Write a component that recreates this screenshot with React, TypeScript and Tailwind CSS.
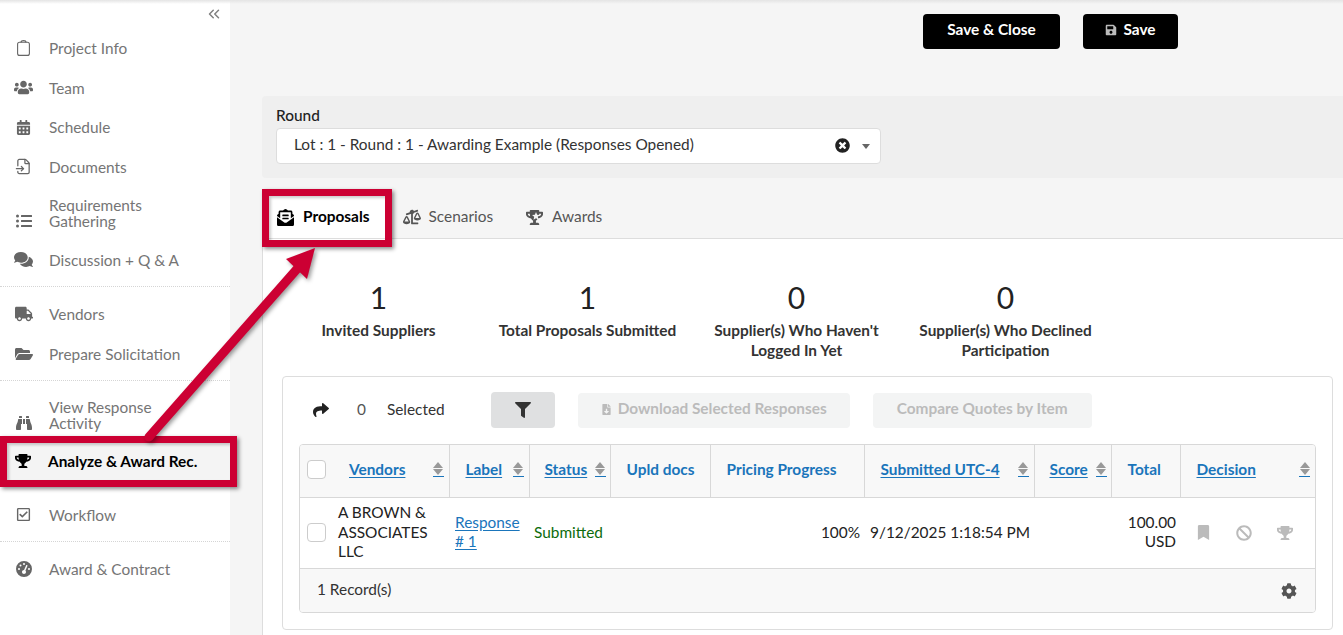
// Awarding page
import React from "react";
import { ChevronsLeft, FileInput } from "lucide-react";
import {
  FaBalanceScaleLeft,
  FaBan,
  FaBinoculars,
  FaBookmark,
  FaCalendarAlt,
  FaCog,
  FaComments,
  FaEnvelopeOpenText,
  FaFileDownload,
  FaFilter,
  FaFolderOpen,
  FaListUl,
  FaRegCheckSquare,
  FaSave,
  FaShare,
  FaTimesCircle,
  FaTrophy,
  FaTruck,
  FaUsers,
} from "react-icons/fa";
import { FaGaugeHigh } from "react-icons/fa6";

const ClipboardIcon = () => (
  <svg width="13" height="16" viewBox="0 0 13 16" fill="none" stroke="currentColor" strokeWidth="1.1">
    <rect x="0.6" y="2.2" width="11.8" height="13.2" rx="2" />
    <path d="M4 2.4C4 1.2 5 0.6 6.5 0.6S9 1.2 9 2.4" />
  </svg>
);

// trophy with the small star in its cup
const StarTrophy = () => (
  <span className="relative inline-flex">
    <FaTrophy size={17} />
    <svg className="absolute top-[3px] left-[5.5px]" width="8" height="8" viewBox="0 0 10 10">
      <polygon points="5,0 6.4,3.3 10,3.6 7.3,6 8.1,9.6 5,7.7 1.9,9.6 2.7,6 0,3.6 3.6,3.3" fill="#f5f5f5" />
    </svg>
  </span>
);

const NavItem = ({
  icon,
  label,
  active,
  pad = "py-[11.8px]",
}: {
  icon: React.ReactNode;
  label: React.ReactNode;
  active?: boolean;
  pad?: string;
}) => (
  <div
    className={`flex items-end text-[15.4px] leading-[16px] ${pad} ${
      active ? "bg-[#f4f4f4] pl-[13px] font-bold text-black" : "pl-[14px] text-[#757575]"
    }`}
  >
    <span className={`flex h-4 w-[19px] shrink-0 items-center justify-center ${active ? "text-black" : "text-[#666]"}`}>
      {icon}
    </span>
    <span className="ml-4">{label}</span>
  </div>
);

const Divider = ({ className = "mb-[6.5px]" }: { className?: string }) => (
  <div className={`mt-[6.5px] border-t border-dotted border-[#d5d5d5] ${className}`} />
);

const Sidebar = () => (
  <aside className="w-[230px] shrink-0 bg-white">
    <div className="flex h-[28.4px] justify-end pt-[5px] pr-[7px] text-[#808080]">
      <ChevronsLeft size={18} strokeWidth={2} />
    </div>
    <NavItem icon={<ClipboardIcon />} label="Project Info" />
    <NavItem icon={<FaUsers size={19} />} label="Team" />
    <NavItem icon={<FaCalendarAlt size={15} />} label="Schedule" />
    <NavItem icon={<FileInput size={17} strokeWidth={1.8} />} label="Documents" />
    <NavItem
      pad="pt-[10.3px] pb-[10.9px]"
      icon={<FaListUl size={16} />}
      label={<>Requirements<br />Gathering</>}
    />
    <NavItem icon={<FaComments size={19} />} label="Discussion + Q & A" />
    <Divider className="mb-[7.3px]" />
    <NavItem icon={<FaTruck size={18} />} label="Vendors" />
    <NavItem icon={<FaFolderOpen size={18} />} label="Prepare Solicitation" />
    <Divider />
    <NavItem pad="py-[11px]" icon={<FaBinoculars size={16} />} label={<>View Response<br />Activity</>} />
    <NavItem icon={<FaTrophy size={16} />} label="Analyze & Award Rec." active />
    <div className="h-[14px]" />
    <NavItem icon={<FaRegCheckSquare size={15} />} label="Workflow" />
    <Divider />
    <NavItem icon={<FaGaugeHigh size={16} />} label="Award & Contract" />
  </aside>
);

const Tab = ({
  icon,
  label,
  active,
  gap,
}: {
  icon: React.ReactNode;
  label: string;
  active?: boolean;
  gap: string;
}) => (
  <div
    className={`flex h-[48px] items-center px-[15px] pt-[6px] text-[15.4px] ${gap} ${
      active ? "bg-white font-bold text-black" : "text-[#555]"
    }`}
  >
    {icon}
    {label}
  </div>
);

const Stat = ({ value, label }: { value: string; label: React.ReactNode }) => (
  <div className="w-[209px] text-center">
    <div className="text-[30px] leading-[36px] text-[#222]">{value}</div>
    <div className="mt-[5px] text-[15.4px] leading-[20px] font-bold text-[#333]">{label}</div>
  </div>
);

const Sort = () => (
  <span className="flex w-[11px] shrink-0 flex-col items-center gap-[1px] border-b border-[#1a75bb] pb-[1px]">
    <span className="h-0 w-0 border-x-[5px] border-b-[6px] border-x-transparent border-b-[#999]" />
    <span className="h-0 w-0 border-x-[5px] border-t-[6px] border-x-transparent border-t-[#999]" />
  </span>
);

const Check = () => (
  <span className="block h-[19px] w-[19px] shrink-0 rounded-[4px] border border-[#ccc] bg-white" />
);

const HeadLink = ({ children }: { children: React.ReactNode }) => (
  <span className="underline underline-offset-2">{children}</span>
);

const th = "border-l border-[#d8d8d8] px-[4px] pb-[2px] font-bold first:border-l-0";

const ProposalsTable = () => (
  <div className="mt-[16px] overflow-hidden rounded-[4px] border border-[#d8d8d8]">
    <table className="w-full table-fixed border-collapse text-[15.4px] leading-[19px]">
      <colgroup>
        <col className="w-[149px]" />
        <col className="w-[80px]" />
        <col className="w-[81px]" />
        <col className="w-[100px]" />
        <col className="w-[154px]" />
        <col className="w-[170px]" />
        <col className="w-[77px]" />
        <col className="w-[69px]" />
        <col />
      </colgroup>
      <thead>
        <tr className="h-[52px] bg-[#f8f8f8] text-[#1a75bb]">
          <th className={th + " pr-[5px] pl-[7px]"}>
            <div className="flex items-center">
              <Check />
              <span className="ml-[23px] flex-1 text-left"><HeadLink>Vendors</HeadLink></span>
              <Sort />
            </div>
          </th>
          <th className={th}>
            <div className="flex items-center pr-[1px] pl-[12px]">
              <span className="flex-1 text-left"><HeadLink>Label</HeadLink></span>
              <Sort />
            </div>
          </th>
          <th className={th}>
            <div className="flex items-center pl-[1px]">
              <span className="flex-1 pl-[10px] text-left"><HeadLink>Status</HeadLink></span>
              <Sort />
            </div>
          </th>
          <th className={th + " pl-[16px] text-left"}>Upld docs</th>
          <th className={th + " pl-[16px] text-left"}>Pricing Progress</th>
          <th className={th}>
            <div className="flex items-center pr-[1px] pl-[12px]">
              <span className="flex-1 text-left"><HeadLink>Submitted UTC-4</HeadLink></span>
              <Sort />
            </div>
          </th>
          <th className={th}>
            <div className="flex items-center pl-[11px]">
              <span className="flex-1 text-left"><HeadLink>Score</HeadLink></span>
              <Sort />
            </div>
          </th>
          <th className={th + " pl-[16px] text-left"}>Total</th>
          <th className={th}>
            <div className="flex items-center pr-[1px] pl-[12px]">
              <span className="flex-1 text-left"><HeadLink>Decision</HeadLink></span>
              <Sort />
            </div>
          </th>
        </tr>
      </thead>
      <tbody>
        <tr className="h-[71px] border-t border-[#d8d8d8] bg-white text-[#222]">
          <td className="pr-[4px] pl-[7px]">
            <div className="flex items-center">
              <Check />
              <span className="ml-[12px] pb-[1px] leading-[19.5px]">A BROWN &amp; ASSOCIATES LLC</span>
            </div>
          </td>
          <td className="pb-[2px] pl-[6px] text-[#1a75bb] underline underline-offset-2">Response # 1</td>
          <td className="pb-[1px] pl-[5px] text-[#0b6b0b]">Submitted</td>
          <td />
          <td className="pr-[4px] pb-[1px] text-right">100%</td>
          <td colSpan={2} className="pb-[1px] pl-[6px]">9/12/2025 1:18:54 PM</td>
          <td className="pr-[4px] pb-[2px] text-right">100.00 USD</td>
          <td className="pl-[15px]">
            <div className="flex items-center text-[#bbb]">
              <FaBookmark size={15} className="ml-[1px]" />
              <FaBan size={16} className="ml-[25px]" />
              <FaTrophy size={16} className="ml-[25px]" />
            </div>
          </td>
        </tr>
      </tbody>
    </table>
    <div className="flex h-[44px] items-center justify-between border-t border-[#d8d8d8] bg-[#f8f8f8] pr-[18px] pl-[17px] text-[15.4px] text-[#333]">
      <span className="pb-[2px]">1 Record(s)</span>
      <FaCog size={16} className="text-[#555]" />
    </div>
  </div>
);

const Annotations = () => (
  <>
    <div className="pointer-events-none absolute top-0 left-0 h-[4px] w-full bg-gradient-to-b from-[#e4e4e4] to-transparent" />
    <div className="pointer-events-none absolute top-[436px] left-0 h-[51px] w-[237px] border-[7px] border-[#cc0033] shadow-[2px_2px_4px_rgba(0,0,0,0.45),inset_2px_2px_3px_rgba(0,0,0,0.2)]" />
    <div className="pointer-events-none absolute top-[189px] left-[262px] h-[58px] w-[130px] border-[7px] border-[#cc0033] shadow-[2px_2px_4px_rgba(0,0,0,0.45),inset_2px_2px_3px_rgba(0,0,0,0.2)]" />
    <svg
      className="pointer-events-none absolute top-0 left-0 drop-shadow-[2px_2px_2px_rgba(0,0,0,0.4)]"
      width="1343"
      height="635"
    >
      <line x1="149" y1="437" x2="297" y2="269" stroke="#cc0033" strokeWidth="9" strokeLinecap="round" />
      <polygon points="315,248 286,259 307,279" fill="#cc0033" />
    </svg>
  </>
);

const App = () => {
  return (
    <div className="relative flex h-[635px] w-[1343px] overflow-hidden bg-[#f5f5f5] font-['Lato',sans-serif] text-[15.4px]">
      <Sidebar />
      <main className="min-w-0 flex-1">
        <div className="flex h-[96px] gap-[23px] pt-[14px] pl-[693px] font-bold text-white">
          <button className="h-[35px] w-[137px] rounded-[4px] bg-black pb-[3px]">Save &amp; Close</button>
          <button className="flex h-[35px] w-[95px] items-center justify-center gap-[6px] rounded-[4px] bg-black pb-[3px]">
            <FaSave size={12} className="text-[#bbb]" />
            Save
          </button>
        </div>
        <div className="ml-[32px]">
          <div className="h-[82px] rounded-l-[4px] bg-[#efefef] pt-[9px] pl-[14px]">
            <div className="text-[15.4px] leading-[20px] font-medium text-[#222]">Round</div>
            <div className="mt-[3px] flex h-[36px] w-[605px] items-center rounded-[4px] border border-[#ddd] bg-white pr-[10px] pb-[2px] pl-[17px] text-[#333]">
              <span className="flex-1">Lot : 1 - Round : 1 - Awarding Example (Responses Opened)</span>
              <FaTimesCircle size={15} className="text-[#222]" />
              <span className="mt-[2px] ml-[12px] h-0 w-0 border-x-[4.5px] border-t-[5px] border-x-transparent border-t-[#666]" />
            </div>
          </div>
          <div className="mt-[12px] flex h-[49px] items-end gap-[3px] border-b border-[#ddd]">
            <Tab active gap="gap-[9px]" icon={<FaEnvelopeOpenText size={17} />} label="Proposals" />
            <Tab gap="gap-[8px]" icon={<FaBalanceScaleLeft size={18} />} label="Scenarios" />
            <Tab gap="gap-[9px]" icon={<StarTrophy />} label="Awards" />
          </div>
          <div className="h-[400px] border-l border-[#ddd] bg-white pt-[40px]">
            <div className="flex pl-[11px]">
              <Stat value="1" label="Invited Suppliers" />
              <Stat value="1" label="Total Proposals Submitted" />
              <Stat value="0" label={<>Supplier(s) Who Haven't<br />Logged In Yet</>} />
              <Stat value="0" label={<>Supplier(s) Who Declined<br />Participation</>} />
            </div>
            <div className="mt-[16px] mr-[10px] ml-[19px] rounded-[4px] border border-[#ddd] px-[16px] pt-[15px] pb-[16px]">
              <div className="flex h-[36px] items-center text-[#333]">
                <FaShare size={16} className="ml-[14px] text-[#222]" />
                <span className="ml-[28px] text-[#555]">0</span>
                <span className="ml-[21px] pb-[1px]">Selected</span>
                <button className="ml-[46px] flex h-[36px] w-[64px] items-center justify-center rounded-[4px] bg-[#dfe0e1] text-[#333]">
                  <FaFilter size={16} />
                </button>
                <button className="ml-[23px] flex h-[35px] w-[272px] items-center justify-center gap-[6px] rounded-[4px] bg-[#f3f4f4] pb-[2px] font-bold text-[#bbb]">
                  <FaFileDownload size={11} />
                  Download Selected Responses
                </button>
                <button className="ml-[23px] h-[35px] w-[219px] rounded-[4px] bg-[#f3f4f4] pb-[2px] font-bold text-[#bbb]">
                  Compare Quotes by Item
                </button>
              </div>
              <ProposalsTable />
            </div>
          </div>
        </div>
      </main>
      <Annotations />
    </div>
  );
};

export default App;
